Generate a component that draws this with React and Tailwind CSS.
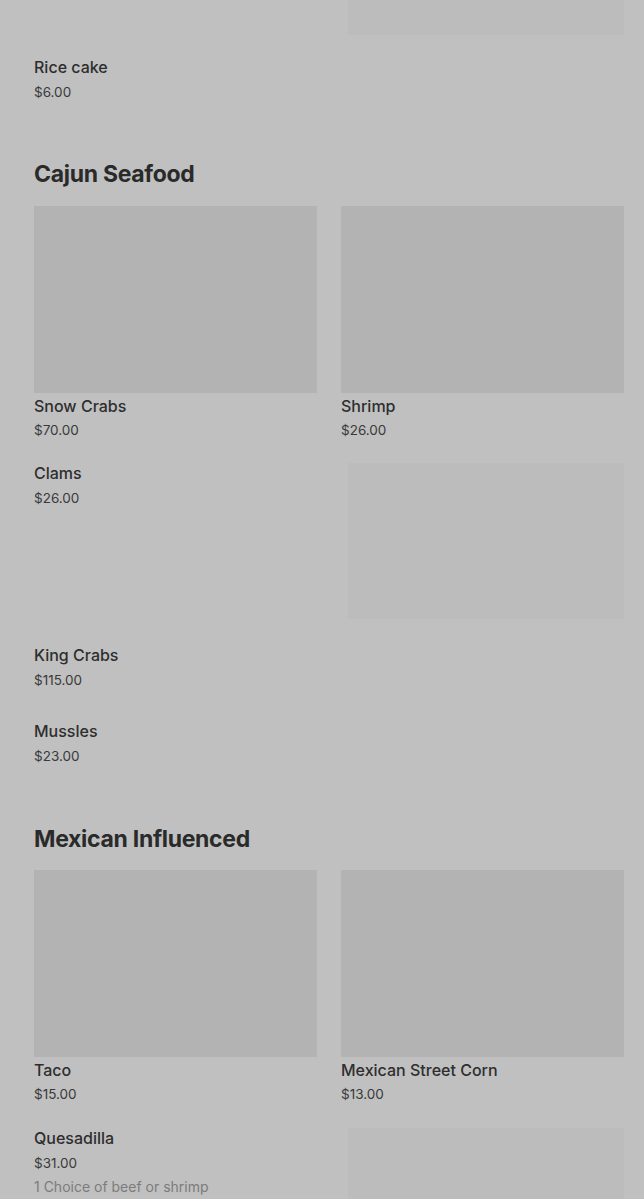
import React from "react";

const font = { fontFamily: "Inter, 'Noto Sans', sans-serif" };

function GridCard({ name, price }) {
  return (
    <div className="flex flex-col">
      <div className="h-[187px] w-full bg-[#b3b3b3]" />
      <div className="mt-[3px] text-[16px] leading-[20px] font-medium text-[#2e2e2e]">{name}</div>
      <div className="mt-[4px] text-[13.5px] leading-[20px] text-[#3a3a3a]">{price}</div>
    </div>
  );
}

function ListItem({ name, price, desc, image }) {
  return (
    <div className="flex items-start justify-between">
      <div className="flex flex-col pb-[5px]">
        <div className="text-[16px] leading-[20px] font-medium text-[#2e2e2e]">{name}</div>
        <div className="mt-[5px] text-[13.5px] leading-[20px] text-[#3a3a3a]">{price}</div>
        {desc && <div className="mt-[4px] text-[14px] leading-[20px] text-[#7c7c7c]">{desc}</div>}
      </div>
      {image && <div className="h-[156px] w-[276px] shrink-0 bg-[#bcbcbc]" />}
    </div>
  );
}

function Heading({ children }) {
  return <h2 className="text-[23px] leading-[32px] font-bold tracking-[-0.3px] text-[#2a2a2a]">{children}</h2>;
}

export default function App() {
  return (
    <div className="min-h-[1199px] w-full overflow-hidden bg-[#c0c0c0] pl-[34px] pr-[20px]" style={font}>
      <div className="-mt-[121px] flex flex-col">
        <div className="flex justify-end">
          <div className="h-[156px] w-[276px] bg-[#bcbcbc]" />
        </div>
        <div className="mt-[22px]">
          <ListItem name="Rice cake" price="$6.00" />
        </div>
      </div>

      <div className="mt-[51px]">
        <Heading>Cajun Seafood</Heading>
        <div className="mt-[16px] grid grid-cols-2 gap-x-[24px]">
          <GridCard name="Snow Crabs" price="$70.00" />
          <GridCard name="Shrimp" price="$26.00" />
        </div>
        <div className="mt-[23px] flex flex-col gap-[26px]">
          <ListItem name="Clams" price="$26.00" image />
          <ListItem name="King Crabs" price="$115.00" />
          <ListItem name="Mussles" price="$23.00" />
        </div>
      </div>

      <div className="mt-[52px]">
        <Heading>Mexican Influenced</Heading>
        <div className="mt-[15px] grid grid-cols-2 gap-x-[24px]">
          <GridCard name="Taco" price="$15.00" />
          <GridCard name="Mexican Street Corn" price="$13.00" />
        </div>
        <div className="mt-[24px] flex flex-col gap-[26px]">
          <ListItem name="Quesadilla" price="$31.00" desc="1 Choice of beef or shrimp" image />
        </div>
      </div>
    </div>
  );
}
